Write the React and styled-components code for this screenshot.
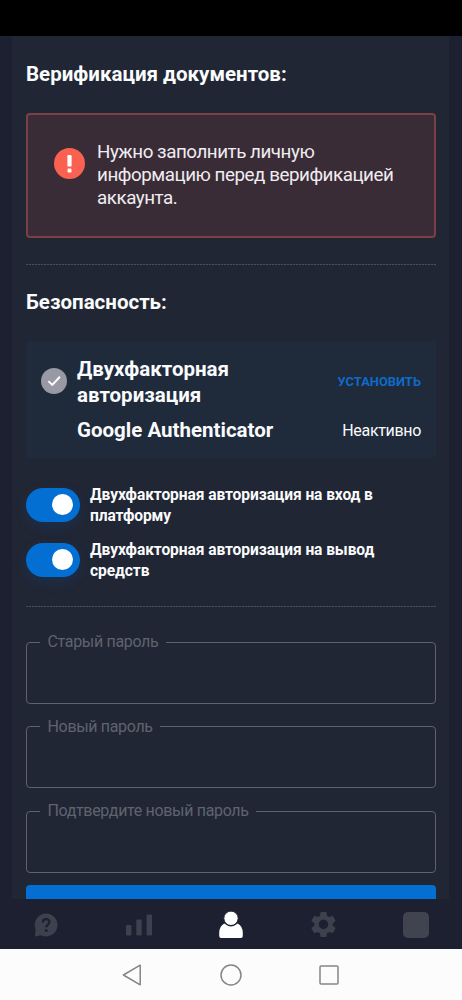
import { useState } from "react";
import styled, { createGlobalStyle } from "styled-components";
import { MdSettings } from "react-icons/md";

const passwordFields = ["Старый пароль", "Новый пароль", "Подтвердите новый пароль"];

const App = () => {
  const [onLogin, setOnLogin] = useState(true);
  const [onWithdraw, setOnWithdraw] = useState(true);

  return (
    <>
      <GlobalStyle />
      <Screen>
        <StatusBar />
        <Content>
          <Panel>
            <Title>Верификация документов:</Title>
            <Alert>
              <AlertIcon viewBox="0 0 31 31">
                <circle cx="15.5" cy="15.5" r="15.5" fill="#fb6150" />
                <rect x="13.4" y="7" width="4.2" height="11.6" rx="1.2" fill="#fff" />
                <rect x="13.5" y="20.6" width="4" height="3.8" rx="1.2" fill="#fff" />
              </AlertIcon>
              <AlertText>
                Нужно заполнить личную<br />
                информацию перед верификацией<br />
                аккаунта.
              </AlertText>
            </Alert>
            <Divider />
            <Title $second>Безопасность:</Title>
            <AuthCard>
              <CheckIcon viewBox="0 0 26 26">
                <circle cx="13" cy="13" r="13" fill="#9899a5" />
                <path d="M7.4 13.1l3.9 3.8 7.6-8.2" fill="none" stroke="#fff" strokeWidth="2" />
              </CheckIcon>
              <AuthBody>
                <AuthRow $height={51}>
                  <AuthTitle>Двухфакторная<br />авторизация</AuthTitle>
                  <Install>УСТАНОВИТЬ</Install>
                </AuthRow>
                <AuthRow $height={26}>
                  <AuthTitle>Google Authenticator</AuthTitle>
                  <State>Неактивно</State>
                </AuthRow>
              </AuthBody>
            </AuthCard>
            <Toggles>
              <ToggleRow>
                <Switch $on={onLogin} onClick={() => setOnLogin(!onLogin)}><Knob /></Switch>
                <ToggleText>Двухфакторная авторизация на вход в<br />платформу</ToggleText>
              </ToggleRow>
              <ToggleRow>
                <Switch $on={onWithdraw} onClick={() => setOnWithdraw(!onWithdraw)}><Knob /></Switch>
                <ToggleText>Двухфакторная авторизация на вывод<br />средств</ToggleText>
              </ToggleRow>
            </Toggles>
            <Divider />
            <Form>
              {passwordFields.map((label) => (
                <Field key={label}>
                  <Legend>{label}</Legend>
                  <Input type="password" aria-label={label} />
                </Field>
              ))}
              <Submit />
            </Form>
          </Panel>
        </Content>
        <TabBar>
          <Tab>
            <svg width="24" height="24" viewBox="0 0 24 24">
              <path d="M12 .6a11.4 11.4 0 1 1-5 21.6L1 23.4l.6-7A11.4 11.4 0 0 1 12 .6z" fill="currentColor" />
              <path d="M8.9 9.4c0-4.3 6.6-4.2 6.6-.3 0 2.6-3.2 2.6-3.2 5.2" fill="none" stroke="#1c2030" strokeWidth="2.2" />
              <circle cx="12.2" cy="17.6" r="1.5" fill="#1c2030" />
            </svg>
          </Tab>
          <Tab>
            <svg width="28" height="24" viewBox="0 0 28 24">
              <rect x="1" y="12" width="5.4" height="10.6" rx="1.3" fill="currentColor" />
              <rect x="11.3" y="6.6" width="5.4" height="16" rx="1.3" fill="currentColor" />
              <rect x="21.6" y="1.6" width="5.4" height="21" rx="1.3" fill="currentColor" />
            </svg>
          </Tab>
          <Tab $active>
            <svg width="24" height="28" viewBox="0 0 24 28">
              <path d="M5.2 12.6Q12 18.2 18.8 12.6 23.8 15.4 23.8 22V24.4Q23.8 27 21 27H3Q.2 27 .2 24.4V22Q.2 15.4 5.2 12.6z" fill="currentColor" />
              <circle cx="12" cy="7.3" r="7.2" fill="currentColor" stroke="#1c2030" strokeWidth="1" />
            </svg>
          </Tab>
          <Tab><MdSettings size={31} /></Tab>
          <Tab><Square /></Tab>
        </TabBar>
        <SystemBar>
          <svg width="20" height="22" viewBox="0 0 20 22">
            <path d="M18.2 1.2v19.6L1.4 11z" />
          </svg>
          <svg width="22" height="22" viewBox="0 0 22 22">
            <circle cx="11" cy="11" r="10" />
          </svg>
          <svg width="20" height="20" viewBox="0 0 20 20">
            <rect x="1" y="1" width="18" height="18" rx="1" />
          </svg>
        </SystemBar>
      </Screen>
    </>
  );
};

const GlobalStyle = createGlobalStyle`
  * {
    box-sizing: border-box;
  }
  body {
    margin: 0;
    background: #1c2030;
    font-family: Roboto, "Noto Sans", sans-serif;
    color: #fafbfc;
  }
`;
const Screen = styled.div`
  display: flex;
  flex-direction: column;
  width: 462px;
  height: 1000px;
  overflow: hidden;
`;
const StatusBar = styled.div`
  height: 36px;
  flex: none;
  background: #000;
`;
const Content = styled.main`
  height: 863px;
  flex: none;
  padding: 0 13px 0 12px;
  overflow: hidden;
`;
const Panel = styled.section`
  height: 100%;
  padding: 25px 13px 0 14px;
  background: #212634;
`;
const Title = styled.h2`
  margin: ${(p) => (p.$second ? "24px" : "0")} 0 26px;
  font-size: 20.5px;
  font-weight: 700;
  line-height: 26px;
  white-space: nowrap;
`;
const Alert = styled.div`
  display: flex;
  height: 125px;
  margin-bottom: 26px;
  padding: 26px 0 0 26px;
  border: 2px solid #7a4046;
  border-radius: 4px;
  background: #3a2c37;
`;
const AlertIcon = styled.svg`
  width: 31px;
  height: 31px;
  flex: none;
  margin: 7px 12px 0 0;
`;
const AlertText = styled.p`
  margin: 0;
  font-size: 18.8px;
  letter-spacing: -0.46px;
  line-height: 23px;
  white-space: nowrap;
  color: #efedf0;
`;
const Divider = styled.div`
  height: 1px;
  background: repeating-linear-gradient(90deg, #4a4f5c 0 2px, #2a2f3d 2px 3px);
`;
const AuthCard = styled.div`
  display: flex;
  height: 117px;
  padding: 15px 15px 0;
  border-radius: 4px;
  background: #1f2a3b;
`;
const CheckIcon = styled.svg`
  width: 26px;
  height: 26px;
  flex: none;
  margin: 12px 10px 0 0;
`;
const AuthBody = styled.div`
  flex: 1;
  display: flex;
  flex-direction: column;
  gap: 10px;
`;
const AuthRow = styled.div`
  display: flex;
  align-items: center;
  justify-content: space-between;
  height: ${(p) => p.$height}px;
`;
const AuthTitle = styled.div`
  font-size: 20.5px;
  font-weight: 700;
  line-height: 26px;
  white-space: nowrap;
`;
const Install = styled.a`
  font-size: 12.9px;
  font-weight: 700;
  color: #0e6bc9;
`;
const State = styled.span`
  font-size: 16px;
  letter-spacing: -0.33px;
`;
const Toggles = styled.div`
  display: flex;
  flex-direction: column;
  gap: 14px;
  padding: 26px 0 26px;
`;
const ToggleRow = styled.div`
  display: flex;
  align-items: center;
  gap: 10px;
  height: 41px;
`;
const Switch = styled.button`
  display: flex;
  align-items: center;
  justify-content: ${(p) => (p.$on ? "flex-end" : "flex-start")};
  width: 54px;
  height: 34px;
  flex: none;
  padding: 0 7px;
  border: 0;
  border-radius: 17px;
  background: ${(p) => (p.$on ? "#046fd3" : "#3c414d")};
  box-shadow: 0 5px 12px rgba(4, 80, 170, 0.22);
`;
const Knob = styled.span`
  width: 21px;
  height: 21px;
  border-radius: 50%;
  background: #fff;
`;
const ToggleText = styled.div`
  padding-top: 2px;
  font-size: 15.6px;
  letter-spacing: -0.1px;
  font-weight: 700;
  line-height: 20.5px;
  white-space: nowrap;
`;
const Form = styled.form`
  display: flex;
  flex-direction: column;
  padding-top: 25px;
`;
const Field = styled.fieldset`
  height: 71.5px;
  min-width: 0;
  margin: 0 0 13px;
  padding: 0 13px;
  border: 1px solid #5e626e;
  border-radius: 4px;
`;
const Legend = styled.legend`
  padding: 0 7.5px;
  font-size: 16px;
  letter-spacing: -0.33px;
  line-height: 20px;
  color: #5f636f;
`;
const Input = styled.input`
  width: 100%;
  height: 40px;
  border: 0;
  outline: 0;
  background: transparent;
  color: #fff;
`;
const Submit = styled.button`
  height: 48px;
  margin-top: -1px;
  border: 0;
  border-radius: 4px;
  background: #046fd3;
`;
const TabBar = styled.nav`
  display: flex;
  height: 50px;
  flex: none;
  padding-top: 1px;
  background: #1c2030;
`;
const Tab = styled.div`
  flex: 1;
  display: flex;
  align-items: center;
  justify-content: center;
  color: ${(p) => (p.$active ? "#fff" : "#3d414e")};
`;
const Square = styled.span`
  width: 26px;
  height: 26px;
  border-radius: 5px;
  background: #41444e;
`;
const SystemBar = styled.footer`
  display: flex;
  align-items: center;
  justify-content: center;
  gap: 77.5px;
  flex: 1;
  padding-right: 1px;
  background: #fcfcfc;

  svg {
    fill: none;
    stroke: #858585;
    stroke-width: 1.5;
    stroke-linejoin: round;
  }
`;

export default App;
